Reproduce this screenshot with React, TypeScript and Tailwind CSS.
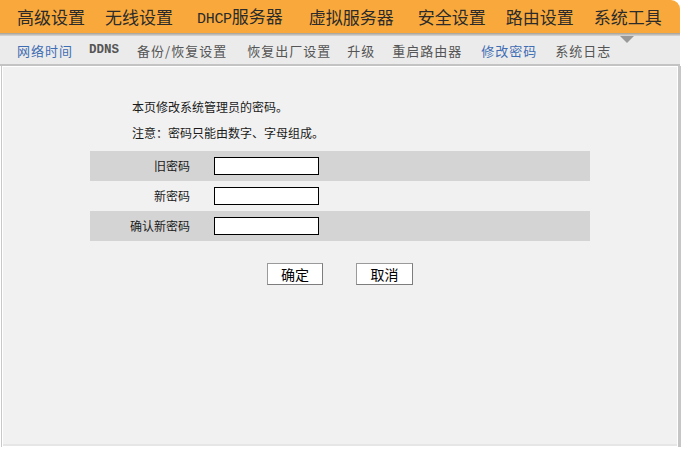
import React from "react";

const cjk = { fontFamily: '"Noto Sans CJK SC", "Noto Sans", sans-serif' };
const mono = { fontFamily: '"Liberation Mono", "Noto Sans CJK SC", monospace' };

export default function App() {
  const top = [
    { t: "高级设置", ml: "ml-[17px]" },
    { t: "无线设置", ml: "ml-[20px]" },
    { t: "DHCP", t2: "服务器", ml: "ml-[24px]" },
    { t: "虚拟服务器", ml: "ml-[26px]" },
    { t: "安全设置", ml: "ml-[24px]" },
    { t: "路由设置", ml: "ml-[20px]" },
    { t: "系统工具", ml: "ml-[20px]" },
  ];
  const sub = [
    { t: "网络时间", ml: "ml-[17px]", blue: true },
    { t: "DDNS", ml: "ml-[16px]", mono: true },
    { t: "备份/恢复设置", ml: "ml-[18px]" },
    { t: "恢复出厂设置", ml: "ml-[20px]" },
    { t: "升级", ml: "ml-[16px]" },
    { t: "重启路由器", ml: "ml-[17px]" },
    { t: "修改密码", ml: "ml-[19px]", blue: true },
    { t: "系统日志", ml: "ml-[18px]" },
  ];
  const rows = [
    { label: "旧密码", bg: "bg-[#d4d4d4]" },
    { label: "新密码", bg: "bg-transparent" },
    { label: "确认新密码", bg: "bg-[#d4d4d4]" },
  ];
  return (
    <div className="w-[683px] h-[452px] bg-white overflow-hidden" style={cjk}>
      {/* top orange nav */}
      <div className="w-[680px] h-[33px] bg-[#f9a93b] rounded-tr-[9px] flex items-center">
        {top.map((it) => (
          <div key={it.t} className={`${it.ml} text-[17px] text-[#2b2b2b] whitespace-nowrap leading-none`}>
            {it.t2 ? (
              <>
                <span style={mono} className="text-[15px] tracking-[-0.3px]">{it.t}</span>
                {it.t2}
              </>
            ) : (
              it.t
            )}
          </div>
        ))}
      </div>
      {/* shadow line */}
      <div className="w-[680px] h-[3px] bg-gradient-to-b from-[#a59f95] to-[#d9d9d9]" />
      {/* sub nav */}
      <div className="w-[680px] h-[28px] bg-[#ebebeb] flex items-center relative">
        <div className="absolute left-[620px] top-0 w-0 h-0 border-l-[7px] border-r-[7px] border-t-[7px] border-l-transparent border-r-transparent border-t-[#999999]" />
        {sub.map((it) => (
          <div
            key={it.t}
            className={`${it.ml} whitespace-nowrap leading-none ${it.blue ? "text-[#3f6db3]" : "text-[#555555]"} ${it.mono ? "text-[12.5px] font-bold text-[#4a4a4a]" : "text-[13px] tracking-[1px]"}`}
            style={it.mono ? mono : undefined}
          >
            {it.t}
          </div>
        ))}
      </div>
      {/* divider */}
      <div className="w-[680px] h-[2px] bg-[#c3c3c3]" />
      {/* body */}
      <div className="flex h-[381px]">
        <div className="w-[1px] ml-[1px] bg-[#c8c8c8]" />
        <div className="w-[1px] bg-white" />
        <div className="w-[674px] flex flex-col">
          <div className="h-[377px] mt-[1px] bg-[#f1f1f1] flex flex-col items-center pt-[27px]">
            <div className="w-[500px]">
              <div className="pl-[42px] text-[12px] leading-[26px] text-[#1a1a1a]">本页修改系统管理员的密码。</div>
              <div className="pl-[42px] text-[12px] leading-[26px] text-[#1a1a1a]">注意：密码只能由数字、字母组成。</div>
              <div className="mt-[5px]">
                {rows.map((r) => (
                  <div key={r.label} className={`${r.bg} h-[30px] flex items-center`}>
                    <div className="w-[100px] text-right text-[12px] text-[#1a1a1a]">{r.label}</div>
                    <div className="ml-[24px] w-[105px] h-[18px] bg-white border border-black" />
                  </div>
                ))}
              </div>
            </div>
            <div className="flex mt-[22px] gap-[33px]">
              <div className="w-[56px] h-[22px] bg-white border border-[#9a9a9a] border-b-[#7d7d7d] border-r-[#7d7d7d] flex items-center justify-center text-[14px] text-black leading-none">
                确定
              </div>
              <div className="w-[57px] h-[22px] bg-white border border-[#9a9a9a] border-b-[#7d7d7d] border-r-[#7d7d7d] flex items-center justify-center text-[14px] text-black leading-none">
                取消
              </div>
            </div>
          </div>
          <div className="h-[2px] bg-[#e6e6e6]" />
        </div>
        <div className="w-[1px] bg-white" />
        <div className="w-[3px] bg-[#c6c6c6]" />
      </div>
    </div>
  );
}
